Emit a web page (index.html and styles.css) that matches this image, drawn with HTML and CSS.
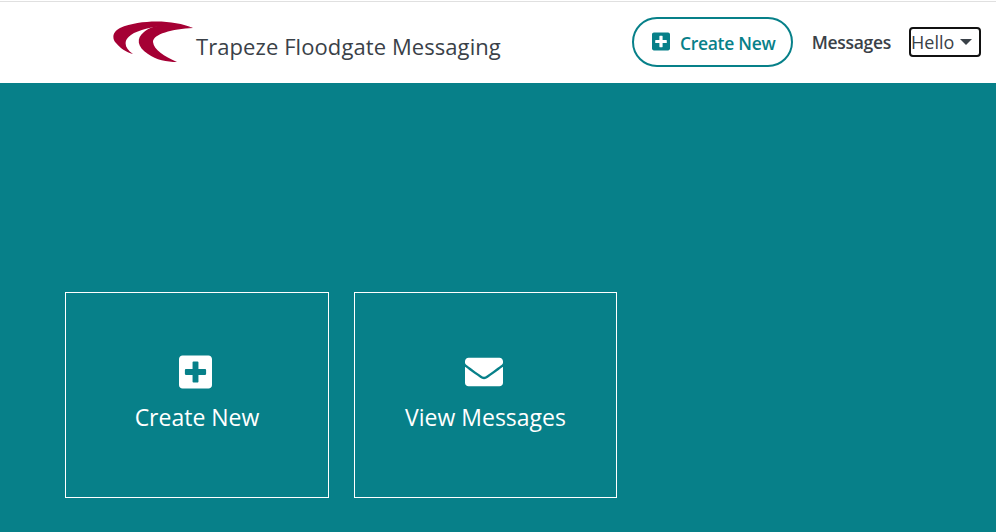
FILE: index.html
```html
<!DOCTYPE html>
<html lang="en">
<head>
    <meta charset="UTF-8">
    <meta name="viewport" content="width=device-width, initial-scale=1.0">
    <title>Trapeze Floodgate Messaging</title>
    <link rel="stylesheet" href="styles.css">
</head>
<body>
<header class="header">
    <a class="brand" href="#">
        <svg class="brand-logo" viewBox="0 0 82 44" aria-hidden="true">
            <path d="M81 8C62 0 30-1 8 8C0 12 0 19 4 23C8 28 14 32 21 34C11 27 11 19 22 13C38 5 60 5 81 8Z"/>
            <path d="M81 8C60 3 40 4 32 12C24 18 25 27 36 34C44 40 55 42 65 42C52 36 42 30 41 22C41 14 60 9 81 8Z"/>
        </svg>
        <span class="brand-name">Trapeze Floodgate Messaging</span>
    </a>
    <nav class="nav">
        <a class="create-btn" href="#">
            <svg class="icon-plus" viewBox="0 0 448 512" aria-hidden="true"><path d="M400 32H48C21.5 32 0 53.5 0 80v352c0 26.5 21.5 48 48 48h352c26.5 0 48-21.5 48-48V80c0-26.5-21.5-48-48-48zm-32 252c0 6.6-5.4 12-12 12h-92v92c0 6.6-5.4 12-12 12h-56c-6.6 0-12-5.4-12-12v-92H92c-6.6 0-12-5.4-12-12v-56c0-6.6 5.4-12 12-12h92v-92c0-6.6 5.4-12 12-12h56c6.6 0 12 5.4 12 12v92h92c6.6 0 12 5.4 12 12v56z"/></svg>
            Create New
        </a>
        <a class="nav-link" href="#">Messages</a>
        <button class="user-btn" type="button">Hello<span class="caret"></span></button>
    </nav>
</header>
<main class="main">
    <a class="card" href="#">
        <svg class="card-icon card-icon-plus" viewBox="0 0 448 512" aria-hidden="true"><path d="M400 32H48C21.5 32 0 53.5 0 80v352c0 26.5 21.5 48 48 48h352c26.5 0 48-21.5 48-48V80c0-26.5-21.5-48-48-48zm-32 252c0 6.6-5.4 12-12 12h-92v92c0 6.6-5.4 12-12 12h-56c-6.6 0-12-5.4-12-12v-92H92c-6.6 0-12-5.4-12-12v-56c0-6.6 5.4-12 12-12h92v-92c0-6.6 5.4-12 12-12h56c6.6 0 12 5.4 12 12v92h92c6.6 0 12 5.4 12 12v56z"/></svg>
        <span>Create New</span>
    </a>
    <a class="card card-wide" href="#">
        <svg class="card-icon card-icon-mail" viewBox="0 0 512 512" aria-hidden="true"><path d="M502.3 190.8c3.9-3.1 9.7-.2 9.7 4.7V400c0 26.5-21.5 48-48 48H48c-26.5 0-48-21.5-48-48V195.6c0-5 5.7-7.8 9.7-4.7 22.4 17.4 52.1 39.5 154.1 113.6 21.1 15.4 56.7 47.8 92.2 47.6 35.7.3 72-32.8 92.3-47.6 102-74.1 131.6-96.3 154-113.7zM256 320c23.2.4 56.6-29.2 73.4-41.4 132.7-96.3 142.8-104.7 173.4-128.7 5.8-4.5 9.2-11.5 9.2-18.9v-19c0-26.5-21.5-48-48-48H48C21.5 64 0 85.5 0 112v19c0 7.4 3.4 14.3 9.2 18.9 30.6 23.9 40.7 32.4 173.4 128.7 16.8 12.2 50.2 41.8 73.4 41.4z"/></svg>
        <span>View Messages</span>
    </a>
</main>
</body>
</html>
```

FILE: styles.css
```css
* {
    box-sizing: border-box;
}
html, body {
    height: 100%;
}
body {
    margin: 0;
    display: flex;
    flex-direction: column;
    overflow: hidden;
    font-family: "Open Sans", "Noto Sans", sans-serif;
    color: #3a4148;
    background-color: #078089;
}
a {
    text-decoration: none;
}
.header {
    height: 83px;
    flex-shrink: 0;
    display: flex;
    justify-content: space-between;
    align-items: center;
    padding: 1px 15px 0 112px;
    background-color: #fff;
    box-shadow: inset 0 1px #fff, inset 0 2px #e0e0e0;
}
.brand {
    display: flex;
    align-items: flex-start;
    color: inherit;
}
.brand-logo {
    width: 82px;
    height: 44px;
    fill: #a50034;
}
.brand-name {
    margin: 11px 0 0 2px;
    font-size: 22px;
    line-height: 30px;
    letter-spacing: 0.08px;
}
.nav {
    display: flex;
    align-items: center;
}
.create-btn {
    width: 161px;
    height: 50px;
    display: flex;
    justify-content: center;
    align-items: center;
    gap: 10px;
    padding: 2px 0 0 3px;
    border: 2px solid #078089;
    border-radius: 25px;
    color: #078089;
    font-size: 17.5px;
    font-weight: 600;
    letter-spacing: -0.3px;
}
.icon-plus {
    width: 18px;
    height: 21px;
    fill: #078089;
    margin-bottom: 4px;
}
.nav-link {
    margin: 0 18px 0 19px;
    color: inherit;
    font-size: 17.5px;
    font-weight: 600;
    letter-spacing: -0.3px;
}
.user-btn {
    width: 72px;
    height: 30px;
    display: flex;
    align-items: center;
    padding: 0;
    border: 2px solid #111;
    border-radius: 4px;
    background: #fff;
    color: inherit;
    font-family: inherit;
    font-size: 18px;
}
.caret {
    margin-left: 6px;
    border-top: 6px solid #3a4148;
    border-left: 6px solid transparent;
    border-right: 6px solid transparent;
}
.main {
    flex: 1;
    display: flex;
    align-items: flex-start;
    gap: 25px;
    padding: 209px 0 0 65px;
}
.card {
    width: 264px;
    height: 206px;
    display: flex;
    flex-direction: column;
    align-items: center;
    padding-top: 60px;
    border: 1px solid #fff;
    color: #fff;
    font-size: 23px;
}
.card-wide {
    width: 263px;
}
.card-icon {
    height: 38px;
    fill: #fff;
    margin: 0 3px 10px 0;
}
.card-icon-plus {
    width: 33px;
}
.card-icon-mail {
    width: 38px;
}
```
